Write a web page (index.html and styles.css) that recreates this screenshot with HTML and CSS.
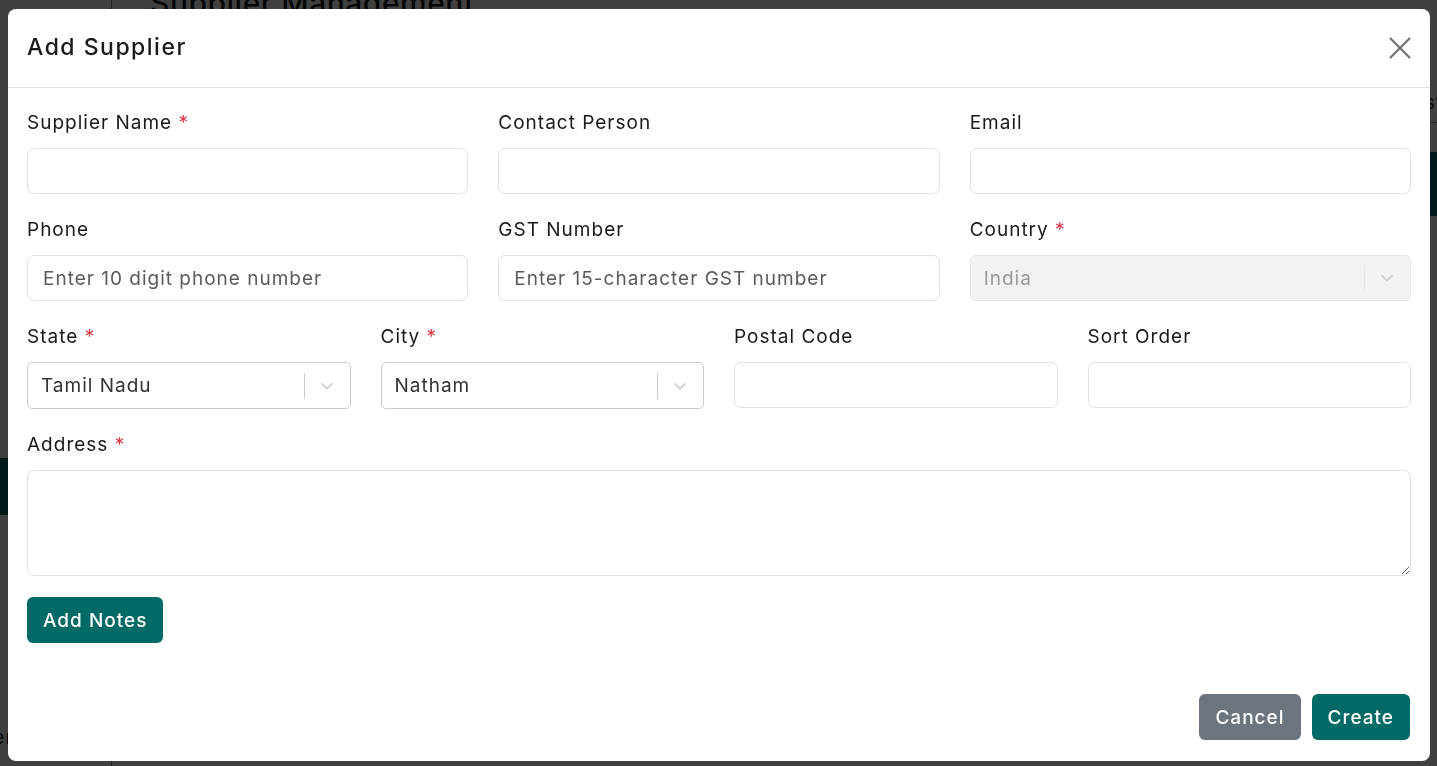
FILE: index.html
```html
<!DOCTYPE html>
<html lang="en">
<head>
    <meta charset="UTF-8">
    <meta name="viewport" content="width=device-width, initial-scale=1.0">
    <title>Suppliers</title>
    <link rel="stylesheet" href="styles.css">
</head>
<body>

<!-- page behind the dialog -->
<div class="page">
    <aside class="sidebar">
        <div class="sidebar-item"></div>
        <div class="sidebar-link">Supplier</div>
        <div class="sidebar-link sidebar-link-low">Customer</div>
    </aside>
    <main class="content">
        <h1 class="content-title">Supplier Management</h1>
        <div class="toolbar">List</div>
        <div class="table-head"></div>
    </main>
</div>

<div class="backdrop"></div>

<div class="modal-wrap">
    <div class="modal">
        <div class="modal-header">
            <h2 class="modal-title">Add Supplier</h2>
            <button class="close-btn" type="button" aria-label="Close">
                <svg width="22" height="22" viewBox="0 0 22 22">
                    <path d="M1 1 L21 21 M21 1 L1 21" stroke="currentColor" stroke-width="2" fill="none"/>
                </svg>
            </button>
        </div>

        <form class="modal-body">
            <div class="grid grid-3">
                <div class="field">
                    <label>Supplier Name <span class="req">*</span></label>
                    <input type="text" class="input">
                </div>
                <div class="field">
                    <label>Contact Person</label>
                    <input type="text" class="input">
                </div>
                <div class="field">
                    <label>Email</label>
                    <input type="email" class="input">
                </div>

                <div class="field">
                    <label>Phone</label>
                    <input type="text" class="input" placeholder="Enter 10 digit phone number">
                </div>
                <div class="field">
                    <label>GST Number</label>
                    <input type="text" class="input" placeholder="Enter 15-character GST number">
                </div>
                <div class="field">
                    <label>Country <span class="req">*</span></label>
                    <div class="select select-disabled">
                        <div class="select-value">India</div>
                        <span class="select-sep"></span>
                        <svg class="select-arrow" width="20" height="20" viewBox="0 0 20 20">
                            <path d="M4.5 7.4l5.5 5.2 5.5-5.2" stroke="currentColor" stroke-width="1.6" fill="none"/>
                        </svg>
                    </div>
                </div>
            </div>

            <div class="grid grid-4">
                <div class="field">
                    <label>State <span class="req">*</span></label>
                    <div class="select">
                        <div class="select-value">Tamil Nadu</div>
                        <span class="select-sep"></span>
                        <svg class="select-arrow" width="20" height="20" viewBox="0 0 20 20">
                            <path d="M4.5 7.4l5.5 5.2 5.5-5.2" stroke="currentColor" stroke-width="1.6" fill="none"/>
                        </svg>
                    </div>
                </div>
                <div class="field">
                    <label>City <span class="req">*</span></label>
                    <div class="select">
                        <div class="select-value">Natham</div>
                        <span class="select-sep"></span>
                        <svg class="select-arrow" width="20" height="20" viewBox="0 0 20 20">
                            <path d="M4.5 7.4l5.5 5.2 5.5-5.2" stroke="currentColor" stroke-width="1.6" fill="none"/>
                        </svg>
                    </div>
                </div>
                <div class="field">
                    <label>Postal Code</label>
                    <input type="text" class="input">
                </div>
                <div class="field">
                    <label>Sort Order</label>
                    <input type="number" class="input">
                </div>
            </div>

            <div class="field">
                <label>Address <span class="req">*</span></label>
                <textarea class="input textarea"></textarea>
            </div>

            <button type="button" class="btn btn-teal">Add Notes</button>
        </form>

        <div class="modal-footer">
            <button type="button" class="btn btn-gray">Cancel</button>
            <button type="button" class="btn btn-teal">Create</button>
        </div>
    </div>
</div>

</body>
</html>
```

FILE: styles.css
```css
* {
    box-sizing: border-box;
}

body {
    margin: 0;
    font-family: 'Inter', 'Noto Sans', sans-serif;
    letter-spacing: 1px;
    color: #1a1a1a;
    background: #ffffff;
    overflow: hidden;
}

/* page under the overlay */
.page {
    display: flex;
    height: 766px;
}

.sidebar {
    width: 112px;
    border-right: 1px solid #888;
    padding-top: 458px;
    overflow: hidden;
}

.sidebar-item {
    height: 57px;
    background: #006a66;
}

.sidebar-link {
    margin-top: 20px;
    font-size: 19px;
    white-space: nowrap;
    text-indent: -82px;
}

.sidebar-link-low {
    margin-top: 168px;
}

.content {
    flex: 1;
    padding-left: 38px;
}

.content-title {
    margin: -15px 0 0;
    font-size: 30px;
    font-weight: 500;
    letter-spacing: 0.5px;
}

.toolbar {
    margin-top: 62px;
    padding: 8px 0;
    text-align: right;
    font-size: 19px;
    margin-right: -6px;
    border-bottom: 1px solid #999;
}

.table-head {
    margin-top: 29px;
    height: 64px;
    background: #006a66;
}

.backdrop {
    position: fixed;
    inset: 0;
    background: rgba(0, 0, 0, 0.75);
}

/* dialog */
.modal-wrap {
    position: fixed;
    inset: 0;
    padding: 9px 0 0 8px;
}

.modal {
    width: 1422px;
    background: #ffffff;
    border-radius: 8px;
}

.modal-header {
    display: flex;
    align-items: center;
    justify-content: space-between;
    padding: 22px 19px 23px;
    border-bottom: 1px solid #dee2e6;
}

.modal-title {
    margin: 0;
    font-size: 23px;
    font-weight: 500;
    line-height: 33px;
    letter-spacing: 1.5px;
}

.close-btn {
    border: none;
    background: none;
    padding: 0;
    color: #6b6b6b;
    width: 22px;
    height: 22px;
    cursor: pointer;
}

.close-btn svg {
    display: block;
}

.modal-body {
    padding: 21px 19px 16px;
}

.grid {
    display: grid;
    column-gap: 30px;
}

.grid-3 {
    grid-template-columns: repeat(3, 1fr);
}

.grid-4 {
    grid-template-columns: repeat(4, 1fr);
}

.field {
    margin-bottom: 22px;
}

.field label {
    display: block;
    font-size: 19px;
    line-height: 28px;
    margin-bottom: 11px;
}

.req {
    color: #dc3545;
}

.input {
    display: block;
    width: 100%;
    height: 46px;
    padding: 0 15px;
    border: 1px solid #dee2e6;
    border-radius: 7px;
    font-family: inherit;
    font-size: 19px;
    letter-spacing: 1px;
    color: #212529;
    background: #ffffff;
}

.input::placeholder {
    color: #595c5f;
}

.textarea {
    height: 106px;
    resize: vertical;
    margin-bottom: -1px;
}

/* react-select look */
.select {
    display: flex;
    align-items: center;
    height: 46px;
    border: 1px solid #cccccc;
    border-radius: 5px;
    background: #ffffff;
}

.grid-4 .select {
    height: 47px;
}

.select-value {
    flex: 1;
    padding-left: 13px;
    font-size: 19px;
    color: #333333;
}

.select-sep {
    width: 1px;
    height: 26px;
    background: #cccccc;
}

.select-arrow {
    margin: 0 13px 0 12px;
    color: #cccccc;
}

.select-disabled {
    background: #f2f2f2;
    border-color: #e6e6e6;
}

.select-disabled .select-value {
    color: #999999;
}

.select-disabled .select-sep {
    background: #e6e6e6;
}

.btn {
    height: 46px;
    padding: 0 16px;
    border: none;
    border-radius: 6px;
    font-family: inherit;
    font-size: 19px;
    font-weight: 500;
    letter-spacing: 1px;
    color: #ffffff;
    cursor: pointer;
}

.btn-teal {
    background: #006a66;
}

.btn-gray {
    background: #6c757d;
}

.modal-footer {
    display: flex;
    justify-content: flex-end;
    gap: 11px;
    padding: 35px 20px 21px;
}
```
